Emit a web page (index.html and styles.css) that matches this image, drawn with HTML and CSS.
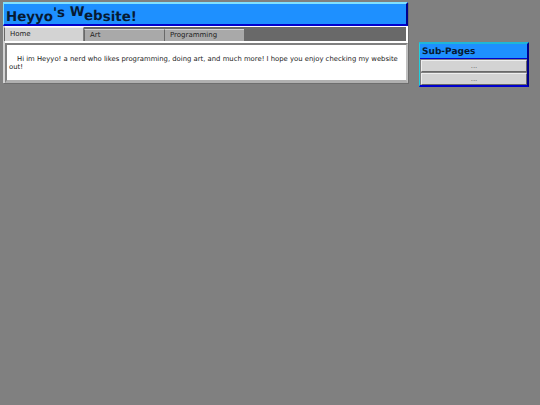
FILE: index.html
```html
<!DOCTYPE html>
<html lang="en">
<head>
    <meta charset="UTF-8">
    <title>Heyyo's Website!</title>
    <link rel="stylesheet" href="styles.css">
</head>
<body>
    <div class="page">
        <div class="main-window">
            <h1 class="title-bar"><span>Heyyo</span><span class="rise-s">'s</span><span> </span><span class="rise-w">W</span><span class="rise-eb">eb</span><span>site!</span></h1>
            <div class="tabs">
                <a class="tab active">Home</a>
                <a class="tab">Art</a>
                <a class="tab">Programming</a>
            </div>
            <div class="content">
                <p>Hi im Heyyo! a nerd who likes programming, doing art, and much more! I hope you enjoy checking my website out!</p>
            </div>
        </div>
        <div class="side-window">
            <h2 class="side-title">Sub-Pages</h2>
            <button class="side-button">...</button>
            <button class="side-button">...</button>
        </div>
    </div>
</body>
</html>
```

FILE: styles.css
```css
html, body {
    margin: 0;
    padding: 0;
    height: 100%;
    background-color: #808080;
    overflow: hidden;
    font-family: "DejaVu Sans", sans-serif;
    text-rendering: geometricPrecision;
}

.page {
    display: flex;
    align-items: flex-start;
    padding: 2px 11px 0 3px;
}

.main-window {
    width: 405px;
    box-sizing: border-box;
    background-color: #fff;
    border-left: 2px solid #d3d3d3;
    box-shadow: 1px 1px 0 #6e6e6e;
}

.title-bar {
    margin: 0 0 0 -2px;
    height: 24px;
    box-sizing: border-box;
    padding: 5px 0 0 2px;
    background-color: #1e90ff;
    border-top: 2px solid #7fe0ff;
    border-left: 1px solid #7fe0ff;
    border-right: 2px solid #00008b;
    border-bottom: 2px solid #0000cd;
    font-size: 13.4px;
    line-height: 17px;
    color: #061a33;
    white-space: pre;
}

.rise-s {
    position: relative;
    top: -4px;
}

.rise-w {
    position: relative;
    top: -5px;
}

.rise-eb {
    position: relative;
    top: -1px;
}

.tabs {
    display: flex;
    align-items: flex-end;
    height: 14px;
    margin: 1px 2px 0 -1px;
    background-color: #696969;
}

.tab {
    width: 80px;
    height: 12px;
    box-sizing: border-box;
    padding-left: 5px;
    font-size: 7px;
    line-height: 11px;
    color: #222;
    background-color: #a9a9a9;
    border-top: 1px solid #d3d3d3;
    border-left: 1px solid #696969;
}

.tab.active {
    height: 14px;
    line-height: 12px;
    background-color: #d3d3d3;
    border-top-color: #eee;
    border-right: 1px solid #808080;
}

.content {
    margin-top: 2px;
    height: 40px;
    box-sizing: border-box;
    padding: 10px 2px 0 2px;
    border-top: 2px solid #808080;
    border-left: 2px solid #808080;
    border-right: 2px solid #c0c0c0;
    border-bottom: 3px solid #b0b0b0;
}

.content p {
    margin: 0;
    font-size: 6.85px;
    line-height: 8px;
    color: #222;
    text-indent: 8px;
}

.side-window {
    margin: 40px 0 0 11px;
    width: 110px;
    box-sizing: border-box;
    background-color: #808080;
    border-top: 2px solid #1fb6d8;
    border-left: 1px solid #1fd0e0;
    border-right: 2px solid #00008b;
    border-bottom: 2px solid #0000cd;
}

.side-title {
    margin: 0;
    height: 15px;
    box-sizing: border-box;
    padding-left: 2px;
    background-color: #1e90ff;
    border-bottom: 1px solid #0000cd;
    font-size: 9px;
    line-height: 16px;
    color: #061a33;
}

.side-button {
    display: block;
    width: 106px;
    height: 12px;
    margin: 1px 0 0 1px;
    padding: 0;
    background-color: #d3d3d3;
    border: 1px solid #eee;
    border-right-color: #696969;
    border-bottom-color: #696969;
    font-family: "DejaVu Sans", sans-serif;
    font-size: 7px;
    line-height: 10px;
    color: #666;
}
```
